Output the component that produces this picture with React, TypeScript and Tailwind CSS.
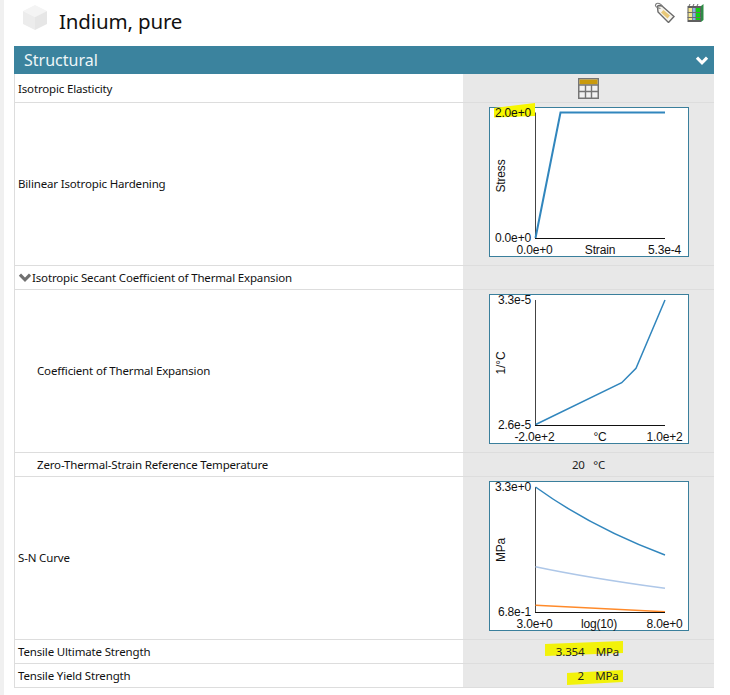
import React from "react";

const BLUE = "#3186bd";

function Cube() {
  return (
    <svg width="26" height="27" viewBox="0 0 26 27" className="block">
      <polygon points="13,1 25,7 13,13 1,7" fill="#f4f4f4" />
      <polygon points="1,7 13,13 13,26 1,20" fill="#ececec" />
      <polygon points="25,7 13,13 13,26 25,20" fill="#e6e6e6" />
    </svg>
  );
}

function Tag() {
  return (
    <svg width="21" height="21" viewBox="0 0 21 21" className="block">
      <path d="M8 4 L20 14.5 L14.5 20.5 L4 10 L3.5 5 Q3.5 3.5 5 3.5 Z" fill="#f6f4ee" stroke="#6a6a6a" strokeWidth="1.4" />
      <path d="M9.5 8 L16 13.5 L13.5 16.5 L7 10.5 Z" fill="#e8c877" />
      <path d="M6.5 6.5 C2 6 0.5 3.5 2 2 C3.5 0.5 7 1.5 8.5 4.5" fill="none" stroke="#7c7c7c" strokeWidth="1.1" />
    </svg>
  );
}

function Books() {
  return (
    <svg width="17" height="18" viewBox="0 0 17 18" className="block">
      <rect x="0.5" y="2" width="13.5" height="16" fill="#5f5f5f" />
      <rect x="1.5" y="4" width="3.5" height="12" fill="#f3e68e" />
      <rect x="5.5" y="4" width="3" height="12" fill="#8db4e2" />
      <rect x="9" y="4" width="4" height="12" fill="#12cf12" />
      <rect x="0.5" y="8" width="13.5" height="1" fill="#6c6c6c" />
      <rect x="0.5" y="13" width="13.5" height="1" fill="#6c6c6c" />
      <path d="M14 2 L16.5 0 V16 L14 18 Z" fill="#2e8b46" />
      <path d="M2 2 L3 0 M6 2 L7 0 M10 2 L11 0" stroke="#666" strokeWidth="1" />
    </svg>
  );
}

function TableIcon() {
  return (
    <svg width="21" height="21" viewBox="0 0 21 21" className="block">
      <rect x="0.75" y="0.75" width="19.5" height="19.5" fill="#f2f2f2" stroke="#757575" strokeWidth="1.5" />
      <rect x="1.5" y="1.5" width="18" height="5" fill="#c99a0c" />
      <path d="M1 7 H20 M1 13.5 H20 M7.5 7 V20 M13.5 7 V20" stroke="#757575" strokeWidth="1.4" fill="none" />
    </svg>
  );
}

function Chevron({ color, w, h }: { color: string; w: number; h: number }) {
  return (
    <svg width={w} height={h} viewBox="0 0 12 8" className="block">
      <path d="M1.5 1.5 L6 6 L10.5 1.5" fill="none" stroke={color} strokeWidth="2.8" />
    </svg>
  );
}

type Lab = {
  top: string;
  bottom: string;
  left: string;
  mid: string;
  right: string;
  y: string;
  topY: number;
  botY: number;
  xY: number;
  axisTop: number;
  axisBottom: number;
  midX?: number;
  children: React.ReactNode;
  highlight?: boolean;
};

function Chart(p: Lab) {
  return (
    <svg
      width="200"
      height="150"
      viewBox="0 0 200 150"
      className="block overflow-visible"
      fontFamily="'Liberation Sans', Arial, sans-serif"
      fontSize="12"
      fill="#111"
    >
      <rect x="0.5" y="0.5" width="199" height="149" fill="#fff" stroke="#3a7f9c" />
      {p.highlight ? <polygon points="5,1 46,-4 46,9 5,10.5" fill="#f7f700" /> : null}
      <path d={`M46.5 ${p.axisTop} V${p.axisBottom}`} stroke="#444" strokeWidth="1" fill="none" />
      {p.children}
      <path d={`M46 ${p.axisBottom} H176`} stroke="#111" strokeWidth="1" fill="none" />
      <text x="42" y={p.topY} textAnchor="end">{p.top}</text>
      <text x="42" y={p.botY} textAnchor="end">{p.bottom}</text>
      <text x="45.5" y={p.xY} textAnchor="middle">{p.left}</text>
      <text x={p.midX ?? 111} y={p.xY} textAnchor="middle">{p.mid}</text>
      <text x="175.5" y={p.xY} textAnchor="middle">{p.right}</text>
      <text x="0" y="0" textAnchor="middle" transform="translate(15.5 69) rotate(-90)">{p.y}</text>
    </svg>
  );
}

function Row({
  label,
  indent,
  h,
  children,
  chevron,
  chart,
  nudge,
}: {
  label: string;
  indent?: boolean;
  h: string;
  children?: React.ReactNode;
  chevron?: boolean;
  chart?: boolean;
  nudge?: boolean;
}) {
  return (
    <div className={`grid grid-cols-[449px_251px] border-b border-[#dddddd] ${h}`}>
      <div className={`flex items-center border-l border-[#dddddd] bg-white text-[#111111] ${nudge ? "pt-px" : ""}`}>
        {chevron ? (
          <div className="flex items-center pl-[3px]">
            <Chevron color="#707070" w={14} h={9} />
          </div>
        ) : (
          <div className={indent ? "w-[22px]" : "w-[3px]"} />
        )}
        <span>{label}</span>
      </div>
      <div
        className={
          chart
            ? "flex items-start bg-[#e8e8e8] pl-[26px] pt-1"
            : "relative flex items-center justify-center bg-[#e8e8e8] text-[#222222]"
        }
      >
        {children}
      </div>
    </div>
  );
}

function Marked({ x, w, points, children }: { x: number; w: number; points: string; children: React.ReactNode }) {
  return (
    <>
      <svg width={w} height="24" viewBox={`0 0 ${w} 24`} className="absolute top-0" style={{ left: x }}>
        <polygon points={points} fill="#f2f20a" />
      </svg>
      {children}
    </>
  );
}

export default function App() {
  return (
    <div
      className="flex h-[695px] w-[730px] overflow-hidden bg-white text-[11.5px] tracking-[-0.16px]"
      style={{ fontFamily: "'Noto Sans', 'Open Sans', sans-serif" }}
    >
      <div className="w-1 bg-[#f0f0f0]" />
      <div className="ml-[10px] w-[700px]">
        <div className="flex h-[46px] items-start">
          <div className="ml-2 mt-1">
            <Cube />
          </div>
          <div className="ml-[11px] mt-[5px] text-[20.5px] leading-[32px] tracking-[-0.15px] text-[#111111]">Indium, pure</div>
          <div className="ml-auto mr-[10px] mt-[2px] flex items-start gap-[12px]">
            <Tag />
            <div className="mt-[2px]">
              <Books />
            </div>
          </div>
        </div>
        <div className="flex h-7 items-center justify-between bg-[#3b839e] pl-[10px] pr-[5px] text-[16px] tracking-normal text-[#eef6f8]">
          <span>Structural</span>
          <Chevron color="#ffffff" w={14} h={9} />
        </div>
        <Row label="Isotropic Elasticity" h="h-[29px]" nudge>
          <TableIcon />
        </Row>
        <Row label="Bilinear Isotropic Hardening" h="h-[163px]" chart>
          <Chart
            highlight
            top="2.0e+0"
            bottom="0.0e+0"
            left="0.0e+0"
            mid="Strain"
            right="5.3e-4"
            y="Stress"
            topY={10}
            botY={135}
            xY={147}
            axisTop={5.5}
            axisBottom={131.5}
          >
            <polyline points="46.5,131 71.5,5.5 176,5.5" fill="none" stroke={BLUE} strokeWidth="2" />
          </Chart>
        </Row>
        <Row label="Isotropic Secant Coefficient of Thermal Expansion" h="h-6" chevron />
        <Row label="Coefficient of Thermal Expansion" indent h="h-[163px]" chart>
          <Chart
            top="3.3e-5"
            bottom="2.6e-5"
            left="-2.0e+2"
            mid="°C"
            right="1.0e+2"
            y="1/°C"
            topY={10}
            botY={135}
            xY={147}
            axisTop={6}
            axisBottom={131.5}
          >
            <polyline points="46.7,130.5 132.7,88.7 147,74.3 176,6" fill="none" stroke={BLUE} strokeWidth="1.5" />
          </Chart>
        </Row>
        <Row label="Zero-Thermal-Strain Reference Temperature" indent h="h-6">
          <span className="whitespace-pre">20   °C</span>
        </Row>
        <Row label="S-N Curve" h="h-[163px]" chart>
          <Chart
            top="3.3e+0"
            bottom="6.8e-1"
            left="3.0e+0"
            mid="log(10)"
            right="8.0e+0"
            y="MPa"
            topY={10}
            botY={135}
            xY={147}
            axisTop={6}
            axisBottom={131.5}
            midX={110}
          >
            <path d="M46.5 6 C 88 36, 128 56, 176 74" fill="none" stroke={BLUE} strokeWidth="1.5" />
            <path d="M46.5 85.7 C 90 95, 130 101, 176 107.3" fill="none" stroke="#aec7e8" strokeWidth="1.5" />
            <path d="M46.5 124.3 L176 130.7" fill="none" stroke="#ff8a2a" strokeWidth="1.5" />
          </Chart>
        </Row>
        <Row label="Tensile Ultimate Strength" h="h-6">
          <Marked x={82} w={80} points="0,4 78,1 78,13 0,16">
            <span className="relative whitespace-pre pr-[2px]">3.354    MPa</span>
          </Marked>
        </Row>
        <Row label="Tensile Yield Strength" h="h-6">
          <Marked x={104} w={60} points="0,9 56,6 56,18 0,21">
            <span className="relative whitespace-pre pl-[19px]">2    MPa</span>
          </Marked>
        </Row>
      </div>
    </div>
  );
}
